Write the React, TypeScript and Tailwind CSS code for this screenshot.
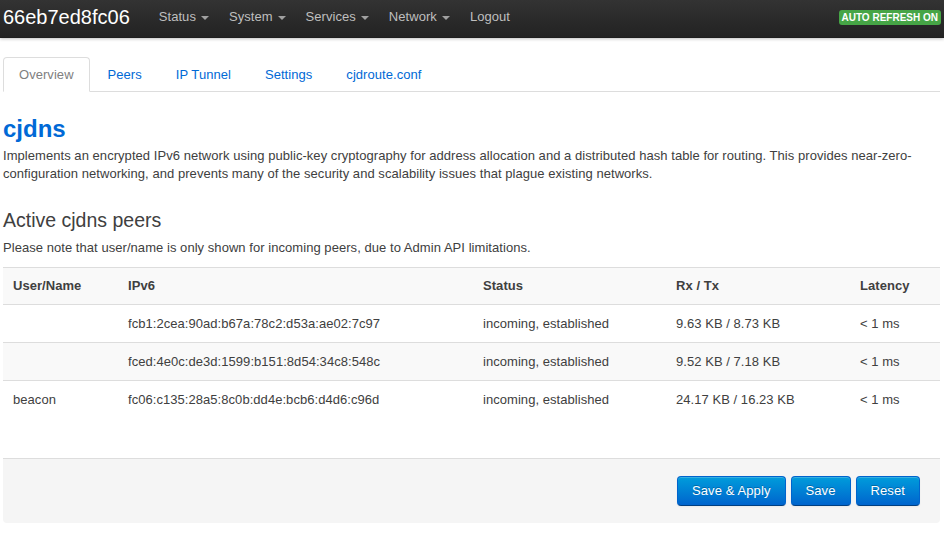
const navItems = ['Status', 'System', 'Services', 'Network'];
const tabs = ['Overview', 'Peers', 'IP Tunnel', 'Settings', 'cjdroute.conf'];

const peers = [
  { name: '', ip: 'fcb1:2cea:90ad:b67a:78c2:d53a:ae02:7c97', status: 'incoming, established', rxtx: '9.63 KB / 8.73 KB', latency: '< 1 ms' },
  { name: '', ip: 'fced:4e0c:de3d:1599:b151:8d54:34c8:548c', status: 'incoming, established', rxtx: '9.52 KB / 7.18 KB', latency: '< 1 ms' },
  { name: 'beacon', ip: 'fc06:c135:28a5:8c0b:dd4e:bcb6:d4d6:c96d', status: 'incoming, established', rxtx: '24.17 KB / 16.23 KB', latency: '< 1 ms' },
];

const cols = 'grid grid-cols-[115px_355px_193px_184px_1fr]';

function Caret() {
  return <span className="ml-[5px] mt-[2px] inline-block h-0 w-0 border-x-[4px] border-t-[4px] border-x-transparent border-t-[#a0a0a0]" />;
}

function Button({ label }: { label: string }) {
  return (
    <button
      type="button"
      className="h-[30px] rounded-[4px] border border-[#0064cd] border-b-[#003f81] bg-gradient-to-b from-[#049cdb] to-[#0064cd] px-[14px] text-[13px] tracking-[0.1px] text-white shadow-[inset_0_1px_0_rgba(255,255,255,0.2),0_1px_2px_rgba(0,0,0,0.05)] [text-shadow:0_-1px_0_rgba(0,0,0,0.25)]"
    >
      {label}
    </button>
  );
}

export default function App() {
  return (
    <div className="min-h-[537px] bg-white font-['Liberation_Sans',Arial,sans-serif] text-[13px] leading-[18px] tracking-[0.05px] text-[#404040]">
      <header className="flex h-[38px] items-center bg-gradient-to-b from-[#333333] to-[#222222] pb-[4px] pl-[3px] pr-[3px] shadow-[0_1px_3px_rgba(0,0,0,0.25),inset_0_-1px_0_rgba(0,0,0,0.1)]">
        <span className="mr-[19px] text-[20px] leading-[24px] tracking-normal text-white">66eb7ed8fc06</span>
        <nav className="flex items-center">
          {navItems.map((item) => (
            <span key={item} className="flex items-center px-[10px] text-[#bfbfbf]">
              {item}
              <Caret />
            </span>
          ))}
          <span className="px-[10px] text-[#bfbfbf]">Logout</span>
        </nav>
        <span className="ml-auto h-[15px] rounded-[3px] bg-[#46a546] px-[3px] text-[10px] font-bold uppercase leading-[15px] tracking-normal text-white">
          Auto Refresh On
        </span>
      </header>

      <main className="pl-[3px] pr-[4px]">
        <ul className="mt-[19px] flex border-b border-[#dddddd]">
          {tabs.map((tab, i) => (
            <li key={tab} className="-mb-px mr-[2px]">
              <span
                className={
                  i === 0
                    ? 'block rounded-t-[4px] border border-[#dddddd] border-b-white bg-white px-[15px] leading-[33px] text-[#808080]'
                    : 'block rounded-t-[4px] border border-transparent px-[15px] leading-[33px] text-[#0069d6]'
                }
              >
                {tab}
              </span>
            </li>
          ))}
        </ul>

        <h2 className="mt-[19px] text-[24px] font-bold leading-[36px] tracking-normal text-[#0069d6]">cjdns</h2>
        <p>
          Implements an encrypted IPv6 network using public-key cryptography for address allocation and a distributed hash table for routing. This provides near-zero-configuration networking, and prevents many of the security and scalability issues that plague existing networks.
        </p>

        <h3 className="mt-[24px] text-[19.5px] leading-[27px] tracking-normal text-[#404040]">Active cjdns peers</h3>
        <p className="mt-[5px]">Please note that user/name is only shown for incoming peers, due to Admin API limitations.</p>

        <div className="mt-[10px] border-t border-[#dddddd]">
          <div className={`${cols} bg-[#f9f9f9] font-bold`}>
            {['User/Name', 'IPv6', 'Status', 'Rx / Tx', 'Latency'].map((h) => (
              <div key={h} className="px-[10px] py-[9px] leading-[18px]">
                {h}
              </div>
            ))}
          </div>
          {peers.map((p, i) => (
            <div key={p.ip} className={`${cols} border-t border-[#dddddd] ${i % 2 === 1 ? 'bg-[#f9f9f9]' : 'bg-white'}`}>
              <div className="px-[10px] py-[9px] leading-[19px]">{p.name}</div>
              <div className="px-[10px] py-[9px] leading-[19px]">{p.ip}</div>
              <div className="px-[10px] py-[9px] leading-[19px]">{p.status}</div>
              <div className="px-[10px] py-[9px] leading-[19px]">{p.rxtx}</div>
              <div className="px-[10px] py-[9px] leading-[19px]">{p.latency}</div>
            </div>
          ))}
        </div>

        <div className="mt-[40px] flex justify-end gap-[5px] rounded-b-[4px] border-t border-[#dddddd] bg-[#f5f5f5] py-[17px] pr-[20px]">
          <Button label="Save & Apply" />
          <Button label="Save" />
          <Button label="Reset" />
        </div>
      </main>
    </div>
  );
}
